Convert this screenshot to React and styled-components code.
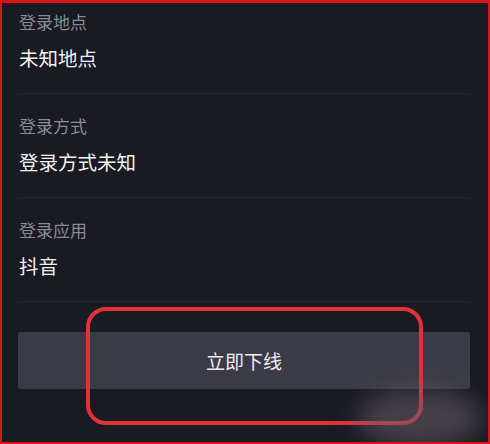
import React from "react";
import styled, { createGlobalStyle } from "styled-components";

const GlobalStyle = createGlobalStyle`
  html, body {
    margin: 0;
    padding: 0;
    background: #191a22;
  }
  * {
    box-sizing: border-box;
  }
`;

const Frame = styled.div`
  position: relative;
  width: 490px;
  height: 444px;
  overflow: hidden;
  background: #191a22;
  border: 2px solid #d9141a;
  border-top-width: 3px;
  font-family: "Noto Sans CJK SC", "Noto Sans", sans-serif;
`;

const List = styled.div`
  display: flex;
  flex-direction: column;
  margin-top: -13px;
  padding: 0 18px 0 16px;
`;

const Row = styled.div`
  display: flex;
  flex-direction: column;
  gap: 11px;
  padding: 21px 0 21px 1px;
  border-bottom: 1px solid #252730;
`;

const Label = styled.div`
  font-size: 17px;
  line-height: 22px;
  color: #8a8c93;
`;

const Value = styled.div`
  font-size: 19.5px;
  line-height: 28px;
  color: #f1f1f3;
`;

const Footer = styled.div`
  padding: 30px 18px 0 16px;
`;

const OfflineButton = styled.button`
  width: 100%;
  height: 57px;
  border: none;
  border-radius: 3px;
  background: #3a3b44;
  color: #ededf0;
  font-family: inherit;
  font-size: 19px;
  cursor: pointer;
`;

const Highlight = styled.div`
  position: absolute;
  left: 84px;
  top: 304px;
  width: 337px;
  height: 118px;
  border: 4px solid #e0323a;
  border-radius: 20px;
  pointer-events: none;
`;

const Smudge = styled.div`
  position: absolute;
  left: 355px;
  top: 385px;
  width: 125px;
  height: 60px;
  border-radius: 50%;
  background: rgba(105, 95, 105, 0.55);
  filter: blur(12px);
  pointer-events: none;
`;

const rows = [
  { label: "登录地点", value: "未知地点" },
  { label: "登录方式", value: "登录方式未知" },
  { label: "登录应用", value: "抖音" },
];

const App = () => {
  return (
    <>
      <GlobalStyle />
      <Frame>
        <List>
          {rows.map((r) => (
            <Row key={r.label}>
              <Label>{r.label}</Label>
              <Value>{r.value}</Value>
            </Row>
          ))}
        </List>
        <Footer>
          <OfflineButton>立即下线</OfflineButton>
        </Footer>
        <Highlight />
        <Smudge />
      </Frame>
    </>
  );
};

export default App;
